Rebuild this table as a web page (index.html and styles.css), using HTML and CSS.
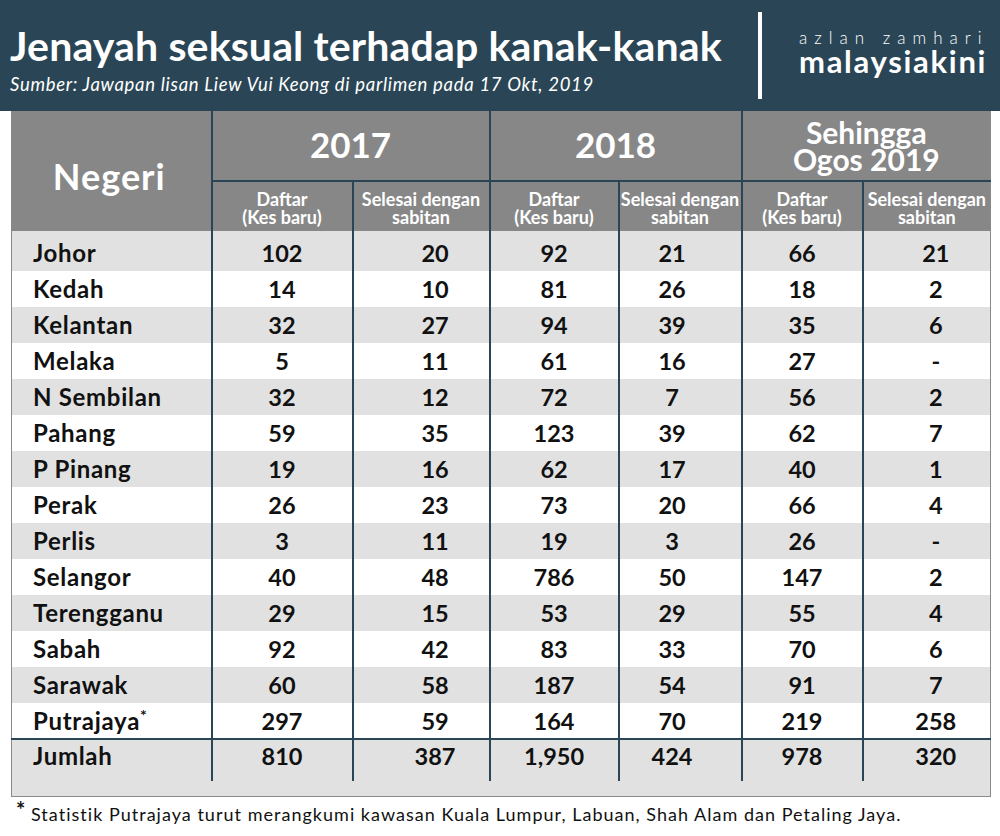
FILE: index.html
```html
<!DOCTYPE html>
<html lang="ms">
<head>
<meta charset="utf-8">
<title>Jenayah seksual terhadap kanak-kanak</title>
<link rel="stylesheet" href="styles.css">
</head>
<body>
<header class="banner">
  <div class="heading">
    <h1 class="title">Jenayah seksual terhadap kanak-kanak</h1>
    <p class="source">Sumber: Jawapan lisan Liew Vui Keong di parlimen pada 17 Okt, 2019</p>
  </div>
  <div class="divider"></div>
  <div class="brand">
    <span class="author">azlan zamhari</span>
    <span class="outlet">malaysiakini</span>
  </div>
</header>
<div class="table-wrap">
<table class="data">
  <colgroup>
    <col class="c-neg"><col class="c-a17"><col class="c-b17"><col class="c-a18"><col class="c-b18"><col class="c-a19"><col class="c-b19">
  </colgroup>
  <thead>
    <tr class="yr">
      <th rowspan="2" class="neg-h">Negeri</th>
      <th colspan="2" class="grp">2017</th>
      <th colspan="2" class="grp">2018</th>
      <th colspan="2" class="grp two">Sehingga<br>Ogos 2019</th>
    </tr>
    <tr class="sub">
      <th class="grp">Daftar<br>(Kes baru)</th><th>Selesai dengan<br>sabitan</th>
      <th class="grp">Daftar<br>(Kes baru)</th><th>Selesai dengan<br>sabitan</th>
      <th class="grp">Daftar<br>(Kes baru)</th><th>Selesai dengan<br>sabitan</th>
    </tr>
  </thead>
  <tbody>
    <tr class="alt first"><td class="st">Johor</td><td class="grp">102</td><td class="b17">20</td><td class="grp">92</td><td class="b18">21</td><td class="grp">66</td><td class="b19">21</td></tr>
    <tr><td class="st">Kedah</td><td class="grp">14</td><td class="b17">10</td><td class="grp">81</td><td class="b18">26</td><td class="grp">18</td><td class="b19">2</td></tr>
    <tr class="alt"><td class="st">Kelantan</td><td class="grp">32</td><td class="b17">27</td><td class="grp">94</td><td class="b18">39</td><td class="grp">35</td><td class="b19">6</td></tr>
    <tr><td class="st">Melaka</td><td class="grp">5</td><td class="b17">11</td><td class="grp">61</td><td class="b18">16</td><td class="grp">27</td><td class="b19">-</td></tr>
    <tr class="alt"><td class="st">N Sembilan</td><td class="grp">32</td><td class="b17">12</td><td class="grp">72</td><td class="b18">7</td><td class="grp">56</td><td class="b19">2</td></tr>
    <tr><td class="st">Pahang</td><td class="grp">59</td><td class="b17">35</td><td class="grp">123</td><td class="b18">39</td><td class="grp">62</td><td class="b19">7</td></tr>
    <tr class="alt"><td class="st">P Pinang</td><td class="grp">19</td><td class="b17">16</td><td class="grp">62</td><td class="b18">17</td><td class="grp">40</td><td class="b19">1</td></tr>
    <tr><td class="st">Perak</td><td class="grp">26</td><td class="b17">23</td><td class="grp">73</td><td class="b18">20</td><td class="grp">66</td><td class="b19">4</td></tr>
    <tr class="alt"><td class="st">Perlis</td><td class="grp">3</td><td class="b17">11</td><td class="grp">19</td><td class="b18">3</td><td class="grp">26</td><td class="b19">-</td></tr>
    <tr><td class="st">Selangor</td><td class="grp">40</td><td class="b17">48</td><td class="grp">786</td><td class="b18">50</td><td class="grp">147</td><td class="b19">2</td></tr>
    <tr class="alt"><td class="st">Terengganu</td><td class="grp">29</td><td class="b17">15</td><td class="grp">53</td><td class="b18">29</td><td class="grp">55</td><td class="b19">4</td></tr>
    <tr><td class="st">Sabah</td><td class="grp">92</td><td class="b17">42</td><td class="grp">83</td><td class="b18">33</td><td class="grp">70</td><td class="b19">6</td></tr>
    <tr class="alt"><td class="st">Sarawak</td><td class="grp">60</td><td class="b17">58</td><td class="grp">187</td><td class="b18">54</td><td class="grp">91</td><td class="b19">7</td></tr>
    <tr><td class="st">Putrajaya<sup class="ast">*</sup></td><td class="grp">297</td><td class="b17">59</td><td class="grp">164</td><td class="b18">70</td><td class="grp">219</td><td class="b19">258</td></tr>
  </tbody>
  <tfoot>
    <tr class="total"><td class="st">Jumlah</td><td class="grp">810</td><td class="b17">387</td><td class="grp">1,950</td><td class="b18">424</td><td class="grp">978</td><td class="b19">320</td></tr>
    <tr class="pad"><td colspan="7"></td></tr>
  </tfoot>
</table>
</div>
<p class="note"><span class="note-ast">*</span> Statistik Putrajaya turut merangkumi kawasan Kuala Lumpur, Labuan, Shah Alam dan Petaling Jaya.</p>
</body>
</html>
```
FILE: styles.css
```css
* { box-sizing: border-box; }
body {
  margin: 0;
  background: #ffffff;
  font-family: "Lato", "DejaVu Sans", sans-serif;
  width: 1000px;
}
.banner {
  height: 111px;
  background: #2a4656;
  color: #ffffff;
  display: flex;
  align-items: flex-start;
}
.heading {
  width: 758px;
  padding: 22px 0 0 10px;
}
.title {
  margin: 0;
  font-size: 41px;
  font-weight: 700;
  line-height: 48px;
  letter-spacing: 0.15px;
  white-space: nowrap;
}
.source {
  margin: 3px 0 0 0;
  font-size: 18.5px;
  font-style: italic;
  line-height: 22px;
  letter-spacing: 0.7px;
  white-space: nowrap;
}
.divider {
  width: 4px;
  height: 87px;
  margin-top: 12px;
  background: #ffffff;
}
.brand {
  display: flex;
  flex-direction: column;
  padding: 29px 0 0 37px;
}
.author {
  font-size: 17px;
  font-weight: 300;
  letter-spacing: 7px;
  line-height: 18px;
  white-space: nowrap;
}
.outlet {
  font-size: 31px;
  font-weight: 700;
  line-height: 28px;
  letter-spacing: 1.7px;
  white-space: nowrap;
}
.table-wrap {
  padding: 0 10px 0 11px;
}
.data {
  width: 979px;
  table-layout: fixed;
  border-collapse: collapse;
  border-left: 1px solid #8a8a8a;
  border-right: 1px solid #8a8a8a;
  border-bottom: 1px solid #8a8a8a;
  color: #111111;
}
.c-neg { width: 200px; }
.c-a17 { width: 141px; }
.c-b17 { width: 137px; }
.c-a18 { width: 129px; }
.c-b18 { width: 123px; }
.c-a19 { width: 121px; }
.c-b19 { width: 128px; }
.data th {
  background: #878787;
  color: #ffffff;
  font-weight: 700;
  text-align: center;
  padding: 0;
}
.data .grp { border-left: 2px solid #2a4656; }
.data td { border-left: 2px solid #2a4656; }
.data td.st { border-left: none; }
.yr th {
  height: 70px;
  font-size: 35px;
  line-height: 34px;
  padding-bottom: 4px;
}
.yr th.two {
  font-size: 30px;
  line-height: 27px;
  padding-bottom: 0;
}
.yr th.grp { border-bottom: 2px solid #2a4656; }
.yr th.neg-h {
  font-size: 36px;
  letter-spacing: 1px;
  padding: 10px 4px 0 0;
}
.sub th {
  height: 50px;
  font-size: 18px;
  line-height: 18px;
  padding-top: 2px;
}
.sub th + th { border-left: 2px solid #2a4656; }
.data td {
  height: 36px;
  font-size: 23.5px;
  font-weight: 700;
  text-align: center;
  padding: 0;
  vertical-align: middle;
  line-height: 26px;
  background: #ffffff;
}
.data tr.alt td { background: #e1e1e1; }
.data tr.first td { height: 40px; padding-top: 3px; }
.data td.st {
  text-align: left;
  padding-left: 21px;
  font-size: 24px;
  letter-spacing: 0.7px;
}
.data td.b17 { padding-left: 28px; }
.data td.b18 { padding-right: 16px; }
.data td.b19 { padding-left: 18px; }
.ast {
  font-size: 16px;
  line-height: 0;
  vertical-align: 9px;
}
.total td {
  background: #e1e1e1;
  height: 42px;
  vertical-align: top;
  padding-top: 3px;
  border-top: 2px solid #2a4656;
}
.data .pad td {
  height: 15px;
  border-left: none;
  background: #e1e1e1;
}
.note {
  margin: 6px 0 0 16px;
  font-size: 18px;
  line-height: 22px;
  letter-spacing: 1.02px;
  color: #111111;
  white-space: nowrap;
}
.note-ast {
  font-weight: 700;
  font-size: 22px;
  vertical-align: 3px;
  line-height: 0;
  letter-spacing: 0;
}
```
